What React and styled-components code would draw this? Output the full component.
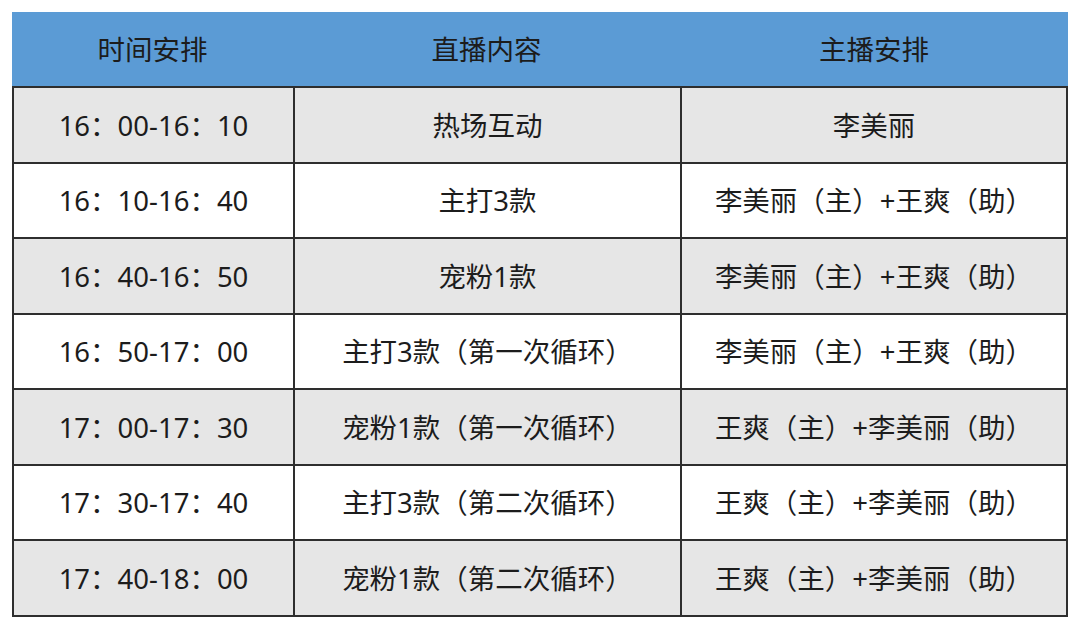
import React from "react";
import styled, { createGlobalStyle } from "styled-components";

const Global = createGlobalStyle`
  html, body { margin: 0; padding: 0; background: #ffffff; }
  body { font-family: "Noto Sans", "Noto Sans CJK SC", sans-serif; }
`;

const Page = styled.div`
  width: 1080px;
  height: 627px;
  padding: 12px 0 0 12px;
  box-sizing: border-box;
  background: #ffffff;
`;

const Table = styled.div`
  width: 1056px;
  display: flex;
  flex-direction: column;
`;

const Header = styled.div`
  display: grid;
  grid-template-columns: 281px 387px 388px;
  height: 74px;
  background: #5b9bd5;
`;

const HeadCell = styled.div`
  display: flex;
  align-items: center;
  justify-content: center;
  font-size: 27.5px;
  color: #1c1c1c;
  padding-bottom: 2px;
`;

const Body = styled.div`
  display: grid;
  grid-template-columns: 279px 385px 384px;
  grid-auto-rows: 73.5px;
  gap: 2px;
  padding: 2px;
  background: #2e2e2e;
`;

const Cell = styled.div`
  display: flex;
  align-items: center;
  justify-content: center;
  font-size: 27.5px;
  color: #1c1c1c;
  background: ${(p) => (p.$shade ? "#e6e6e6" : "#ffffff")};
  white-space: nowrap;
  padding-bottom: 2px;
`;

const rows = [
  ["16：00-16：10", "热场互动", "李美丽"],
  ["16：10-16：40", "主打3款", "李美丽（主）+王爽（助）"],
  ["16：40-16：50", "宠粉1款", "李美丽（主）+王爽（助）"],
  ["16：50-17：00", "主打3款（第一次循环）", "李美丽（主）+王爽（助）"],
  ["17：00-17：30", "宠粉1款（第一次循环）", "王爽（主）+李美丽（助）"],
  ["17：30-17：40", "主打3款（第二次循环）", "王爽（主）+李美丽（助）"],
  ["17：40-18：00", "宠粉1款（第二次循环）", "王爽（主）+李美丽（助）"],
];

export default function App() {
  return (
    <Page>
      <Global />
      <Table>
        <Header>
          <HeadCell>时间安排</HeadCell>
          <HeadCell>直播内容</HeadCell>
          <HeadCell>主播安排</HeadCell>
        </Header>
        <Body>
          {rows.map((r, i) =>
            r.map((t, j) => (
              <Cell key={`${i}-${j}`} $shade={i % 2 === 0}>
                {t}
              </Cell>
            ))
          )}
        </Body>
      </Table>
    </Page>
  );
}
